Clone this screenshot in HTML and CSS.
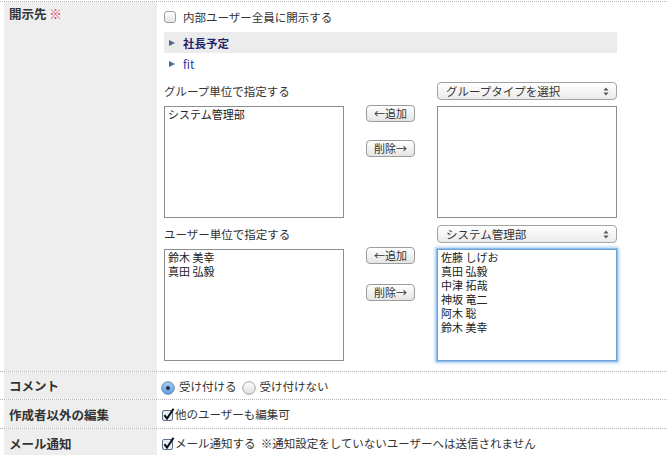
FILE: index.html
```html
<!DOCTYPE html>
<html lang="ja">
<head>
<meta charset="utf-8">
<title>開示先</title>
<link rel="stylesheet" href="styles.css">
</head>
<body>
<div class="form">
  <div class="row row-main">
    <div class="label label-top">開示先 <span class="req">※</span></div>
    <div class="field field-main">
      <div class="check-line"><span class="mac-check"></span>内部ユーザー全員に開示する</div>
      <div class="tree-item active"><span class="tri"></span><span class="tree-name">社長予定</span></div>
      <div class="tree-item"><span class="tri"></span><span class="tree-link">fit</span></div>

      <div class="picker">
        <div class="picker-title">グループ単位で指定する</div>
        <div class="select">グループタイプを選択<svg class="updown" width="6" height="9" viewBox="0 0 6 9"><path d="M3 0.5 L5.5 3.5 H0.5 Z M3 8.5 L5.5 5.5 H0.5 Z" fill="#555"/></svg></div>
        <div class="listbox">
          <div>システム管理部</div>
        </div>
        <div class="buttons buttons-g">
          <button class="btn">←追加</button>
          <button class="btn">削除→</button>
        </div>
        <div class="listbox"></div>
      </div>

      <div class="picker picker-user">
        <div class="picker-title">ユーザー単位で指定する</div>
        <div class="select">システム管理部<svg class="updown" width="6" height="9" viewBox="0 0 6 9"><path d="M3 0.5 L5.5 3.5 H0.5 Z M3 8.5 L5.5 5.5 H0.5 Z" fill="#555"/></svg></div>
        <div class="listbox">
          <div>鈴木 美幸</div>
          <div>真田 弘毅</div>
        </div>
        <div class="buttons buttons-u">
          <button class="btn">←追加</button>
          <button class="btn">削除→</button>
        </div>
        <div class="listbox focused">
          <div>佐藤 しげお</div>
          <div>真田 弘毅</div>
          <div>中津 拓哉</div>
          <div>神坂 竜二</div>
          <div>阿木 聡</div>
          <div>鈴木 美幸</div>
        </div>
      </div>
    </div>
  </div>

  <div class="row row-small">
    <div class="label">コメント</div>
    <div class="field field-inline">
      <span class="radio on"><svg width="14" height="14" viewBox="0 0 14 14"><defs><linearGradient id="rg1" x1="0" y1="0" x2="0" y2="1"><stop offset="0" stop-color="#a9cdf2"/><stop offset="1" stop-color="#5f9ee0"/></linearGradient></defs><circle cx="7" cy="7" r="6.3" fill="url(#rg1)" stroke="#5a7fa8" stroke-width="0.9"/><circle cx="7" cy="7" r="1.9" fill="#1d2b3d"/></svg></span>
      <span class="opt">受け付ける</span>
      <span class="radio"><svg width="14" height="14" viewBox="0 0 14 14"><defs><linearGradient id="rg2" x1="0" y1="0" x2="0" y2="1"><stop offset="0" stop-color="#ffffff"/><stop offset="1" stop-color="#dedede"/></linearGradient></defs><circle cx="7" cy="7" r="6.3" fill="url(#rg2)" stroke="#9a9a9a" stroke-width="0.9"/></svg></span>
      <span class="opt">受け付けない</span>
    </div>
  </div>

  <div class="row row-small">
    <div class="label">作成者以外の編集</div>
    <div class="field field-inline">
      <span class="chk"><svg width="13" height="13" viewBox="0 0 13 13"><rect x="0.5" y="2.5" width="10" height="10" rx="1.5" fill="#e9eff8" stroke="#5b6f8c"/><path d="M2.4 7.2 L5 10.6 L11.6 0.8" fill="none" stroke="#0d0d0d" stroke-width="2"/></svg></span>
      <span>他のユーザーも編集可</span>
    </div>
  </div>

  <div class="row row-small">
    <div class="label">メール通知</div>
    <div class="field field-inline">
      <span class="chk"><svg width="13" height="13" viewBox="0 0 13 13"><rect x="0.5" y="2.5" width="10" height="10" rx="1.5" fill="#e9eff8" stroke="#5b6f8c"/><path d="M2.4 7.2 L5 10.6 L11.6 0.8" fill="none" stroke="#0d0d0d" stroke-width="2"/></svg></span>
      <span>メール通知する&nbsp;&nbsp;※通知設定をしていないユーザーへは送信されません</span>
    </div>
  </div>
</div>
</body>
</html>
```

FILE: styles.css
```css
* { box-sizing: border-box; }

html, body {
  margin: 0;
  padding: 0;
  background: #fff;
}

body {
  font-family: "Noto Sans CJK JP", "DejaVu Sans", sans-serif;
  color: #333;
  font-size: 11.5px;
}

.form {
  margin-top: 1px;
}

.row {
  display: flex;
  border-top: 1px dotted #b8b8b8;
  padding-left: 4px;
}

.label {
  flex: none;
  width: 153px;
  background: #eeeeee;
  font-weight: 700;
  font-size: 12.5px;
  color: #333;
  padding: 0 5px;
  white-space: nowrap;
}

.label-top {
  padding-top: 3px;
  line-height: 18px;
}

.req {
  color: #e3345f;
  font-weight: 700;
}

.field {
  flex: 1;
}

.field-main {
  padding: 6px 0 10px 7px;
}

.check-line {
  display: flex;
  align-items: center;
  height: 18px;
  gap: 7px;
}

.mac-check {
  display: inline-block;
  width: 12px;
  height: 12px;
  border: 1px solid #9d9d9d;
  border-radius: 3px;
  background: linear-gradient(#ffffff, #e4e4e4);
}

.tree-item {
  display: flex;
  align-items: center;
  width: 453px;
  height: 21px;
  padding-left: 5px;
  gap: 8px;
}

.check-line + .tree-item {
  margin-top: 6px;
}

.tree-item.active {
  background: #ececec;
}

.tri {
  width: 0;
  height: 0;
  border-top: 3.5px solid transparent;
  border-bottom: 3.5px solid transparent;
  border-left: 6px solid #4d6b8f;
}

.tree-name {
  color: #25256d;
  font-weight: 700;
}

.tree-link {
  color: #22329a;
}

.picker {
  display: grid;
  grid-template-columns: 180px 49px 180px;
  column-gap: 22px;
  row-gap: 6px;
  margin-top: 8px;
}

.picker-user {
  margin-top: 7px;
}

.picker-title {
  grid-column: 1 / 3;
  line-height: 18px;
  height: 18px;
}

.select {
  position: relative;
  height: 18px;
  line-height: 16px;
  border: 1px solid #a3a3a3;
  border-radius: 4px;
  background: linear-gradient(#ffffff, #ebebeb);
  padding-left: 8px;
  font-size: 11.5px;
  color: #333;
}

.updown {
  position: absolute;
  right: 7px;
  top: 4px;
}

.listbox {
  height: 112px;
  border: 1px solid #8e8e8e;
  background: #fff;
  padding: 0 3px;
  font-size: 11px;
  line-height: 14px;
  color: #222;
}

.listbox.focused {
  border-color: #6fa3d9;
  box-shadow: 0 0 0 1px #8fbce9, 0 0 3px 2px #a9cdf0;
}

.buttons {
  display: flex;
  flex-direction: column;
  align-items: flex-start;
}

.buttons-g {
  margin-top: -1px;
  gap: 18px;
}

.buttons-u {
  margin-top: -2px;
  gap: 20px;
}

.btn {
  width: 49px;
  height: 17px;
  padding: 0;
  margin: 0;
  font-family: "Noto Sans CJK JP", "DejaVu Sans", sans-serif;
  font-size: 11px;
  line-height: 15px;
  color: #333;
  border: 1px solid #9c9c9c;
  border-radius: 4px;
  background: linear-gradient(#ffffff, #e5e5e5);
}

.row-small .label {
  display: flex;
  align-items: center;
}

.row-small:nth-child(2) .label,
.row-small:nth-child(2) .field {
  height: 27px;
}

.row-small:nth-child(3) .label,
.row-small:nth-child(3) .field {
  height: 28px;
}

.row-small:nth-child(4) .label,
.row-small:nth-child(4) .field {
  height: 30px;
}

.row-small:nth-child(4) .field {
  padding-bottom: 2px;
}
.row-small:nth-child(4) .label {
  padding-bottom: 2px;
}

.field-inline {
  display: flex;
  align-items: center;
  padding-left: 4px;
  white-space: nowrap;
}

.radio {
  display: inline-flex;
  width: 14px;
  height: 14px;
  margin-top: 4px;
}

.opt {
  margin-left: 4px;
  margin-right: 5px;
}

.chk {
  display: inline-flex;
  width: 13px;
  height: 13px;
  margin-right: 0;
  margin-left: 1px;
}
```
